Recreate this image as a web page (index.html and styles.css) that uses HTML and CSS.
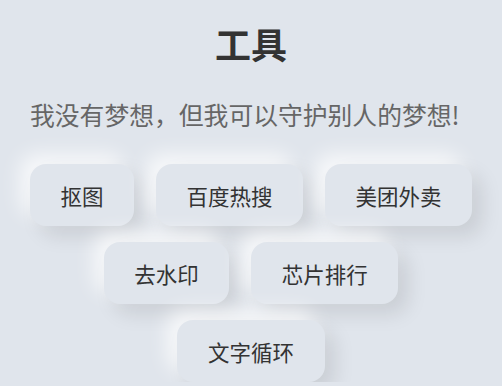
FILE: index.html
```html
<!DOCTYPE html>
<html lang="zh-CN">
<head>
<meta charset="utf-8">
<title>工具</title>
<link rel="stylesheet" href="styles.css">
</head>
<body>
<main class="page">
  <h1 class="title">工具</h1>
  <p class="subtitle">我没有梦想，但我可以守护别人的梦想!</p>
  <div class="tools">
    <div class="row">
      <a class="tool">抠图</a>
      <a class="tool">百度热搜</a>
      <a class="tool">美团外卖</a>
    </div>
    <div class="row">
      <a class="tool">去水印</a>
      <a class="tool">芯片排行</a>
    </div>
    <div class="row">
      <a class="tool">文字循环</a>
    </div>
  </div>
</main>
</body>
</html>
```
FILE: styles.css
```css
html, body {
  margin: 0;
  background: #e0e5ec;
}
body {
  font-family: "Noto Sans CJK SC", "Noto Sans", sans-serif;
  overflow: hidden;
}
.page {
  padding: 25px 30px 0;
}
.title {
  margin: 0;
  font-size: 36px;
  line-height: 36px;
  font-weight: 700;
  text-align: center;
  color: #333;
}
.subtitle {
  margin: 40px 0 0;
  font-size: 24.8px;
  line-height: 26px;
  color: #666;
  white-space: nowrap;
}
.tools {
  margin-top: 37px;
  display: flex;
  flex-direction: column;
  gap: 16px;
}
.row {
  display: flex;
  justify-content: center;
  gap: 22px;
}
.tool {
  display: flex;
  align-items: center;
  justify-content: center;
  height: 62px;
  padding: 0 30.5px;
  font-size: 21.5px;
  color: #333;
  background: #e0e5ec;
  border-radius: 16px;
  box-shadow: 10px 10px 20px rgba(0, 0, 0, 0.1), -10px -10px 20px rgba(255, 255, 255, 0.75);
  white-space: nowrap;
}
```
